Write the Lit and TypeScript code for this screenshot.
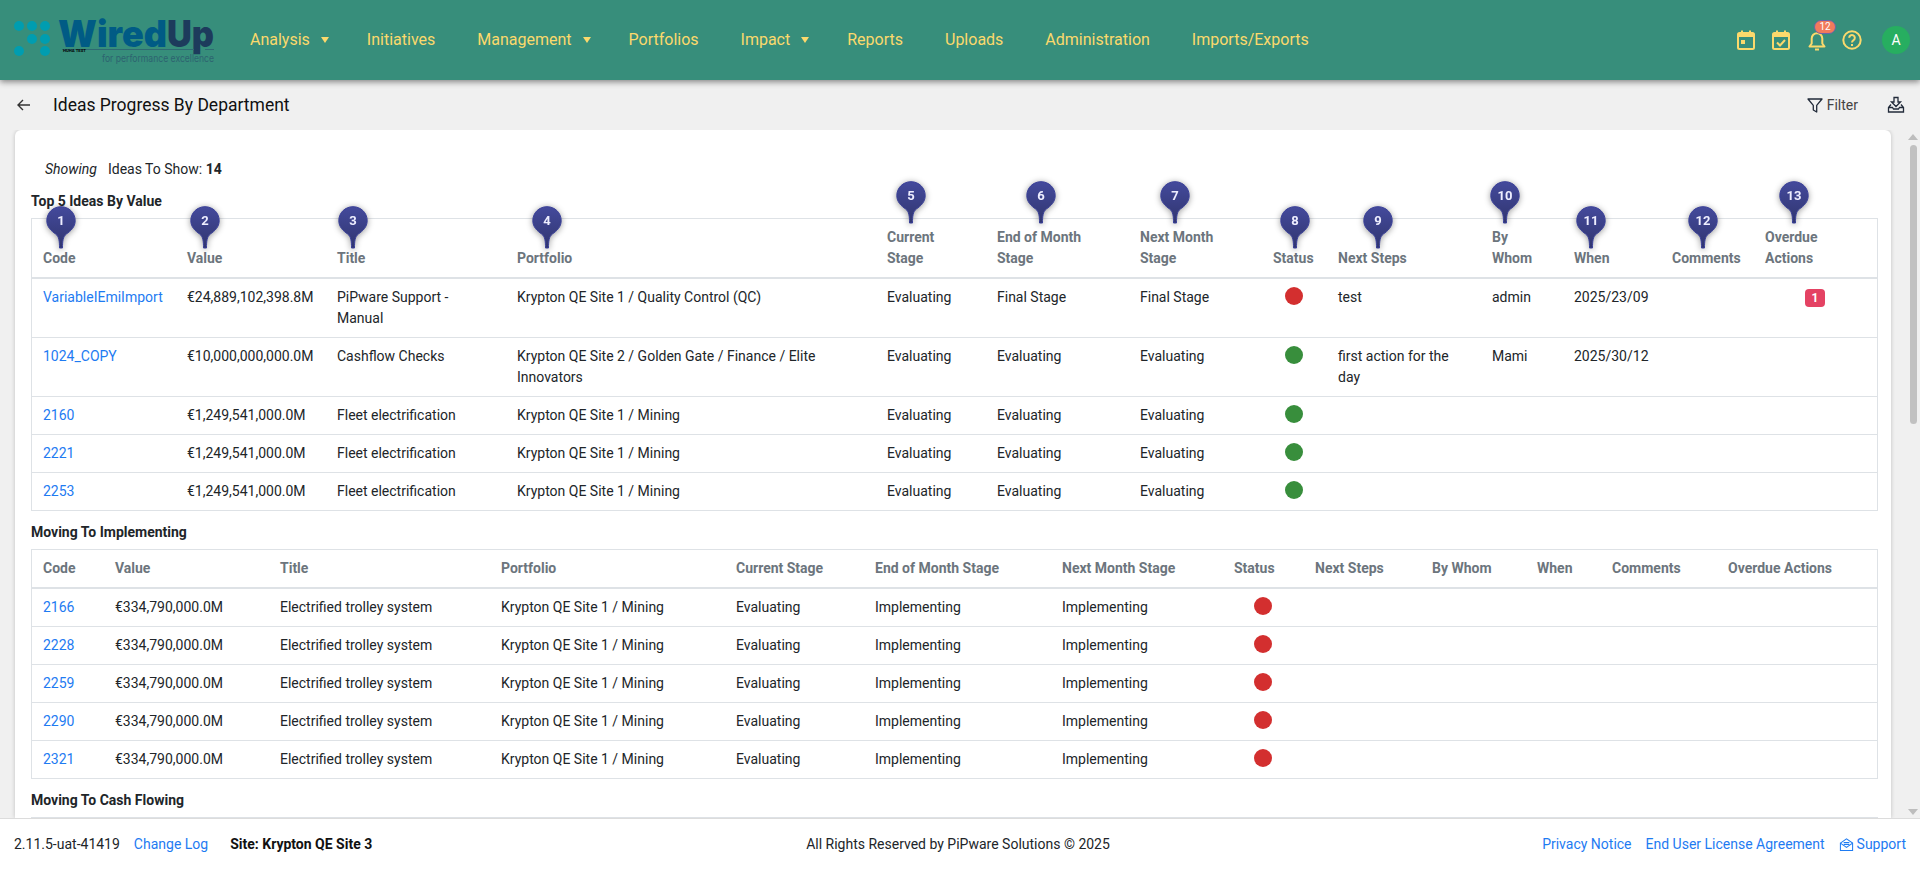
import { LitElement, html, css, svg } from "lit";
import { customElement } from "lit/decorators.js";

type Col = { label: string; pin?: number; off?: number; width: number; two?: boolean; center?: boolean };
type Row = { code: string; value: string; title: string; portfolio: string; cur: string; eom: string; next: string; status: "red" | "green"; steps?: string; who?: string; when?: string; overdue?: string };

const names = ["Code", "Value", "Title", "Portfolio", "Current\nStage", "End of Month\nStage", "Next Month\nStage", "Status", "Next Steps", "By\nWhom", "When", "Comments", "Overdue\nActions"];
const w1 = [143, 150, 180, 370, 110, 143, 133, 65, 154, 82, 98, 93, 124];
const offs = [18, 18, 16, 30, 24, 44, 35, 22, 40, 13, 17, 31, 29];
const w2 = [71, 165, 221, 235, 139, 187, 172, 81, 117, 105, 75, 116, 161];

const cols1: Col[] = names.map((label, i) => ({ label, pin: i + 1, off: offs[i], width: w1[i], two: label.includes("\n"), center: i === 7 || i === 12 }));
const cols2: Col[] = names.map((label, i) => ({ label: label.replace("\n", " "), width: w2[i], center: i === 7 || i === 12 }));

const rows1: Row[] = [
  { code: "VariableIEmiImport", value: "€24,889,102,398.8M", title: "PiPware Support - Manual", portfolio: "Krypton QE Site 1 / Quality Control (QC)", cur: "Evaluating", eom: "Final Stage", next: "Final Stage", status: "red", steps: "test", who: "admin", when: "2025/23/09", overdue: "1" },
  { code: "1024_COPY", value: "€10,000,000,000.0M", title: "Cashflow Checks", portfolio: "Krypton QE Site 2 / Golden Gate / Finance / Elite Innovators", cur: "Evaluating", eom: "Evaluating", next: "Evaluating", status: "green", steps: "first action for the day", who: "Mami", when: "2025/30/12" },
  ...["2160", "2221", "2253"].map((code): Row => ({ code, value: "€1,249,541,000.0M", title: "Fleet electrification", portfolio: "Krypton QE Site 1 / Mining", cur: "Evaluating", eom: "Evaluating", next: "Evaluating", status: "green" })),
];
const rows2: Row[] = ["2166", "2228", "2259", "2290", "2321"].map((code) => ({ code, value: "€334,790,000.0M", title: "Electrified trolley system", portfolio: "Krypton QE Site 1 / Mining", cur: "Evaluating", eom: "Implementing", next: "Implementing", status: "red" }));

const nav: [string, boolean][] = [["Analysis", true], ["Initiatives", false], ["Management", true], ["Portfolios", false], ["Impact", true], ["Reports", false], ["Uploads", false], ["Administration", false], ["Imports/Exports", false]];

const pin = (n: number) => html`<svg class="pin-svg" width="30" height="42" viewBox="0 0 30 42">
  <defs><linearGradient id="pg${n}" x1="0" y1="0" x2="0" y2="1"><stop offset="0" stop-color="#444a9c"/><stop offset="1" stop-color="#30356f"/></linearGradient></defs>
  <path d="M15 .7C7 .7.8 6.9.8 14.6c0 6.6 4.6 10.4 8.8 13.4 3.4 2.5 3.9 7 3.9 14h3c0-7 .5-11.5 3.9-14 4.2-3 8.8-6.800 8.800-13.400C29.200 6.900 23 .7 15 .7z" fill="url(#pg${n})" stroke="#3a4099" stroke-width="1"/>
  <text x="15" y="19" text-anchor="middle" class="pin-num">${n}</text>
</svg>`;

const logo = svg`
  <g fill="#009db0">
    <circle cx="19" cy="26" r="5"/><circle cx="32" cy="26" r="5"/><circle cx="45" cy="26" r="5"/>
    <circle cx="32" cy="39" r="5"/><circle cx="45" cy="39" r="5"/>
    <circle cx="19" cy="51" r="5"/><circle cx="45" cy="51" r="5"/>
  </g>
  <text x="58" y="47" class="lg lg-a" textLength="109" lengthAdjust="spacingAndGlyphs">Wired</text>
  <text x="167" y="47" class="lg lg-b" textLength="47" lengthAdjust="spacingAndGlyphs">Up</text>
  <rect x="62" y="49" width="132" height="1" fill="#2e6a72"/><rect x="205" y="49" width="9" height="1" fill="#2e6a72"/>
  <text x="63" y="52" class="lg-t" textLength="23" lengthAdjust="spacingAndGlyphs">HUHA TEST</text>
  <text x="102" y="62" class="lg-s" textLength="112" lengthAdjust="spacingAndGlyphs">for performance excellence</text>
`;

@customElement("app-root")
export class AppRoot extends LitElement {
  static styles = css`
    :host { display: flex; flex-direction: column; height: 100vh; overflow: hidden; background: #f0f0f0; font-family: Roboto, "Liberation Sans", sans-serif; font-size: 14px; line-height: 21px; color: #212529; }
    * { box-sizing: border-box; }
    .top { flex: none; height: 80px; background: #378e7b; box-shadow: 0 2px 6px rgba(0,0,0,.45); display: flex; align-items: center; position: relative; z-index: 3; }
    .logo { flex: none; width: 250px; height: 80px; display: block; }
    .lg { font-family: Inter, sans-serif; font-weight: 900; font-size: 37px; }
    .lg-a { fill: #005b85; } .lg-b { fill: #1d3b5c; }
    .lg-t { font-family: Roboto, sans-serif; font-size: 4px; font-weight: 700; fill: #000; }
    .lg-s { font-family: Inter, sans-serif; font-size: 10px; fill: #2d6370; }
    .nav { display: flex; gap: 42px; align-items: center; color: #fbd96c; font-size: 16px; line-height: 24px; }
    .nav-item { display: flex; align-items: center; white-space: nowrap; }
    .caret { width: 0; height: 0; border-left: 4.5px solid transparent; border-right: 4.5px solid transparent; border-top: 6px solid currentColor; margin-left: 11px; margin-right: -4px; }
    .tools { margin-left: auto; display: flex; align-items: center; padding-right: 10px; }
    .tool { width: 24px; height: 24px; display: block; color: #fbd96c; }
    .tool-wrap { position: relative; width: 35.5px; display: flex; justify-content: center; }
    .badge-n { position: absolute; left: 15px; top: -8px; min-width: 22px; height: 14px; padding: 0 4px; border-radius: 8px; background: #f27a5c; border: 1px solid #6a64a8; color: #fff; font-size: 10px; line-height: 12px; text-align: center; }
    .avatar { width: 28px; height: 28px; border-radius: 50%; background: #27ae60; color: #fff; font-size: 14px; display: flex; align-items: center; justify-content: center; margin-left: 12px; }
    .bar { flex: none; height: 50px; display: flex; align-items: center; padding: 0 15px 0 15px; }
    .back { width: 18px; height: 18px; display: block; color: #333; margin-right: 20px; }
    .h1 { font-size: 17.5px; line-height: 24px; color: #111; }
    .bar-r { margin-left: auto; display: flex; align-items: center; color: #444; font-size: 14px; }
    .ic { width: 18px; height: 18px; display: block; color: #222b3a; }
    .filter { display: flex; align-items: center; gap: 3px; margin-right: 29px; }
    .body { flex: 1; min-height: 0; display: flex; overflow: hidden; }
    .card { flex: none; width: 1876px; margin-left: 15px; padding: 29px 13px 0 16px; background: #fff; border-radius: 6px 6px 0 0; box-shadow: 0 0 4px rgba(0,0,0,.2); overflow: hidden; }
    .showing { padding-left: 14px; display: flex; gap: 11px; }
    .showing i { font-style: italic; }
    .showing b { font-weight: 700; }
    .sec { margin: 11px 0 6px; font-weight: 700; color: #212529; }
    .sec-first { margin-top: 11px; }
    .frame { border: 1px solid #dee2e6; }
    .frame-empty { height: 40px; }
    table { border-collapse: separate; border-spacing: 0; table-layout: fixed; width: 100%; }
    th { text-align: left; vertical-align: bottom; padding: 8px 12px; color: #6c757d; font-weight: 700; border-bottom: 2px solid #dee2e6; }
    td { vertical-align: top; padding: 8px 12px; border-bottom: 1px solid #dee2e6; }
    th:first-child, td:first-child { padding-left: 11px; }
    tr:last-child td { border-bottom: 0; }
    .lbl { display: block; position: relative; white-space: pre-line; }
    .pin { position: absolute; bottom: 100%; z-index: 2; }
    .pin-up { bottom: calc(100% + 4px); }
    .pin-svg { display: block; filter: drop-shadow(0 1px 3px rgba(0,0,0,.4)); overflow: visible; }
    .pin-num { font-family: Roboto, sans-serif; font-size: 13px; fill: #eef; }
    .ct { text-align: center; }
    a { color: #1e7bf2; text-decoration: none; }
    .dot { display: inline-block; width: 18px; height: 18px; border-radius: 50%; vertical-align: top; margin-top: 0; }
    .red { background: #d32f2f; } .green { background: #388e3c; }
    .ov { display: inline-block; width: 20px; height: 18px; border-radius: 4px; background: #e44263; color: #fff; font-size: 12px; line-height: 18px; font-weight: 700; vertical-align: top; margin-top: 2px; }
    .sb { flex: 1; display: flex; flex-direction: column; align-items: flex-end; padding: 4px 3px 0 0; position: relative; }
    .sb-up { width: 0; height: 0; border-left: 5px solid transparent; border-right: 5px solid transparent; border-bottom: 6px solid #bdbdbd; margin-right: -1px; }
    .sb-th { width: 7px; height: 279px; margin-top: 5px; border-radius: 4px; background: #c1c1c1; }
    .sb-dn { margin-top: auto; margin-bottom: 3px; width: 0; height: 0; border-left: 5px solid transparent; border-right: 5px solid transparent; border-top: 6px solid #bdbdbd; margin-right: -1px; }
    .foot { flex: none; height: 51px; background: #fff; border-top: 1px solid #dcdcdc; display: grid; grid-template-columns: 1fr auto 1fr; align-items: center; padding: 0 14px; position: relative; z-index: 2; }
    .f-l { display: flex; gap: 14px; align-items: center; }
    .f-l b { margin-left: 8px; font-weight: 700; color: #111; }
    .f-c { margin-right: 4px; }
    .f-r { display: flex; justify-content: flex-end; gap: 14px; align-items: center; }
    .sup { display: flex; align-items: center; gap: 3px; color: #1e7bf2; }
    .sup svg { display: block; width: 15px; height: 15px; }
  `;

  private table(cols: Col[], rows: Row[]) {
    return html`<div class="frame"><table>
      <colgroup>${cols.map((c) => html`<col style="width:${c.width}px">`)}</colgroup>
      <thead><tr>${cols.map((c) => html`<th><span class="lbl">${c.label}${c.pin ? html`<span class="pin ${c.two ? "pin-up" : ""}" style="left:${(c.off ?? 0) - 15}px">${pin(c.pin)}</span>` : ""}</span></th>`)}</tr></thead>
      <tbody>${rows.map((r) => html`<tr>
        <td><a>${r.code}</a></td><td>${r.value}</td><td>${r.title}</td><td>${r.portfolio}</td><td>${r.cur}</td><td>${r.eom}</td><td>${r.next}</td>
        <td class="ct"><span class="dot ${r.status}"></span></td>
        <td>${r.steps ?? ""}</td><td>${r.who ?? ""}</td><td>${r.when ?? ""}</td><td></td>
        <td class="ct">${r.overdue ? html`<span class="ov">${r.overdue}</span>` : ""}</td>
      </tr>`)}</tbody>
    </table></div>`;
  }

  render() {
    return html`
      <header class="top">
        <svg class="logo" viewBox="0 0 250 80">${logo}</svg>
        <nav class="nav">${nav.map(([t, c]) => html`<span class="nav-item">${t}${c ? html`<span class="caret"></span>` : ""}</span>`)}</nav>
        <div class="tools">
          <span class="tool-wrap"><svg class="tool" viewBox="0 0 24 24" fill="none" stroke="currentColor" stroke-width="2"><rect x="4" y="5" width="16" height="16" rx="1.5"/><path d="M4 7.500h16" stroke-width="3"/><path d="M8 2.500v3M16 2.500v3"/><rect x="7" y="12" width="4" height="4" fill="currentColor" stroke="none"/></svg></span>
          <span class="tool-wrap"><svg class="tool" viewBox="0 0 24 24" fill="none" stroke="currentColor" stroke-width="2"><rect x="4" y="5" width="16" height="16" rx="1.5"/><path d="M4 7.500h16" stroke-width="3"/><path d="M8 2.500v3M16 2.500v3"/><path d="M8 14.500l3 3 5-5.500"/></svg></span>
          <span class="tool-wrap"><svg class="tool" viewBox="0 0 24 24" fill="none" stroke="currentColor" stroke-width="2"><path d="M4.500 18.500h15l-2.200-3v-5a5.300 5.300 0 0 0-10.600 0v5z" stroke-linejoin="round"/><path d="M10 21.500h4"/></svg><span class="badge-n">12</span></span>
          <span class="tool-wrap"><svg class="tool" viewBox="0 0 24 24" fill="none" stroke="currentColor" stroke-width="2"><circle cx="12" cy="12" r="8.700"/><path d="M9.200 9.800a2.800 2.800 0 1 1 4.400 2.300c-1 .7-1.600 1.200-1.600 2.400"/><path d="M12 16v2"/></svg></span>
          <span class="avatar">A</span>
        </div>
      </header>
      <div class="bar">
        <svg class="back" viewBox="0 0 18 18" fill="none" stroke="currentColor" stroke-width="1.4"><path d="M15 9H3M8 4L3 9l5 5"/></svg>
        <span class="h1">Ideas Progress By Department</span>
        <div class="bar-r">
          <span class="filter"><svg class="ic" viewBox="0 0 18 18" fill="none" stroke="currentColor" stroke-width="1.3"><path d="M2 3h14l-5.300 6.400V16l-3.400-2V9.400z" stroke-linejoin="round"/></svg>Filter</span>
          <svg class="ic" viewBox="0 0 18 18" fill="none" stroke="currentColor" stroke-width="1.3"><path d="M7 1.500h4v4.500h2.500L9 10.500 4.500 6H7z"/><path d="M4 8.500L1.500 11.500v4.500h15v-4.500L14 8.500M1.500 11.500h4l1 1.500h5l1-1.500h4"/></svg>
        </div>
      </div>
      <div class="body">
        <main class="card">
          <div class="showing"><i>Showing</i><span>Ideas To Show: <b>14</b></span></div>
          <div class="sec sec-first">Top 5 Ideas By Value</div>
          ${this.table(cols1, rows1)}
          <div class="sec">Moving To Implementing</div>
          ${this.table(cols2, rows2)}
          <div class="sec">Moving To Cash Flowing</div>
          <div class="frame frame-empty"></div>
        </main>
        <div class="sb"><span class="sb-up"></span><span class="sb-th"></span><span class="sb-dn"></span></div>
      </div>
      <footer class="foot">
        <div class="f-l"><span>2.11.5-uat-41419</span><a>Change Log</a><b>Site: Krypton QE Site 3</b></div>
        <div class="f-c">All Rights Reserved by PiPware Solutions © 2025</div>
        <div class="f-r"><a>Privacy Notice</a><a>End User License Agreement</a>
          <span class="sup"><svg viewBox="0 0 16 16" fill="none" stroke="currentColor" stroke-width="1.1"><path d="M1.500 6.500L8 2l6.500 4.500V14.500h-13z"/><path d="M1.500 6.500L8 11l6.500-4.500"/><path d="M5 6h6M5 8h6"/></svg><a>Support</a></span>
        </div>
      </footer>
    `;
  }
}
